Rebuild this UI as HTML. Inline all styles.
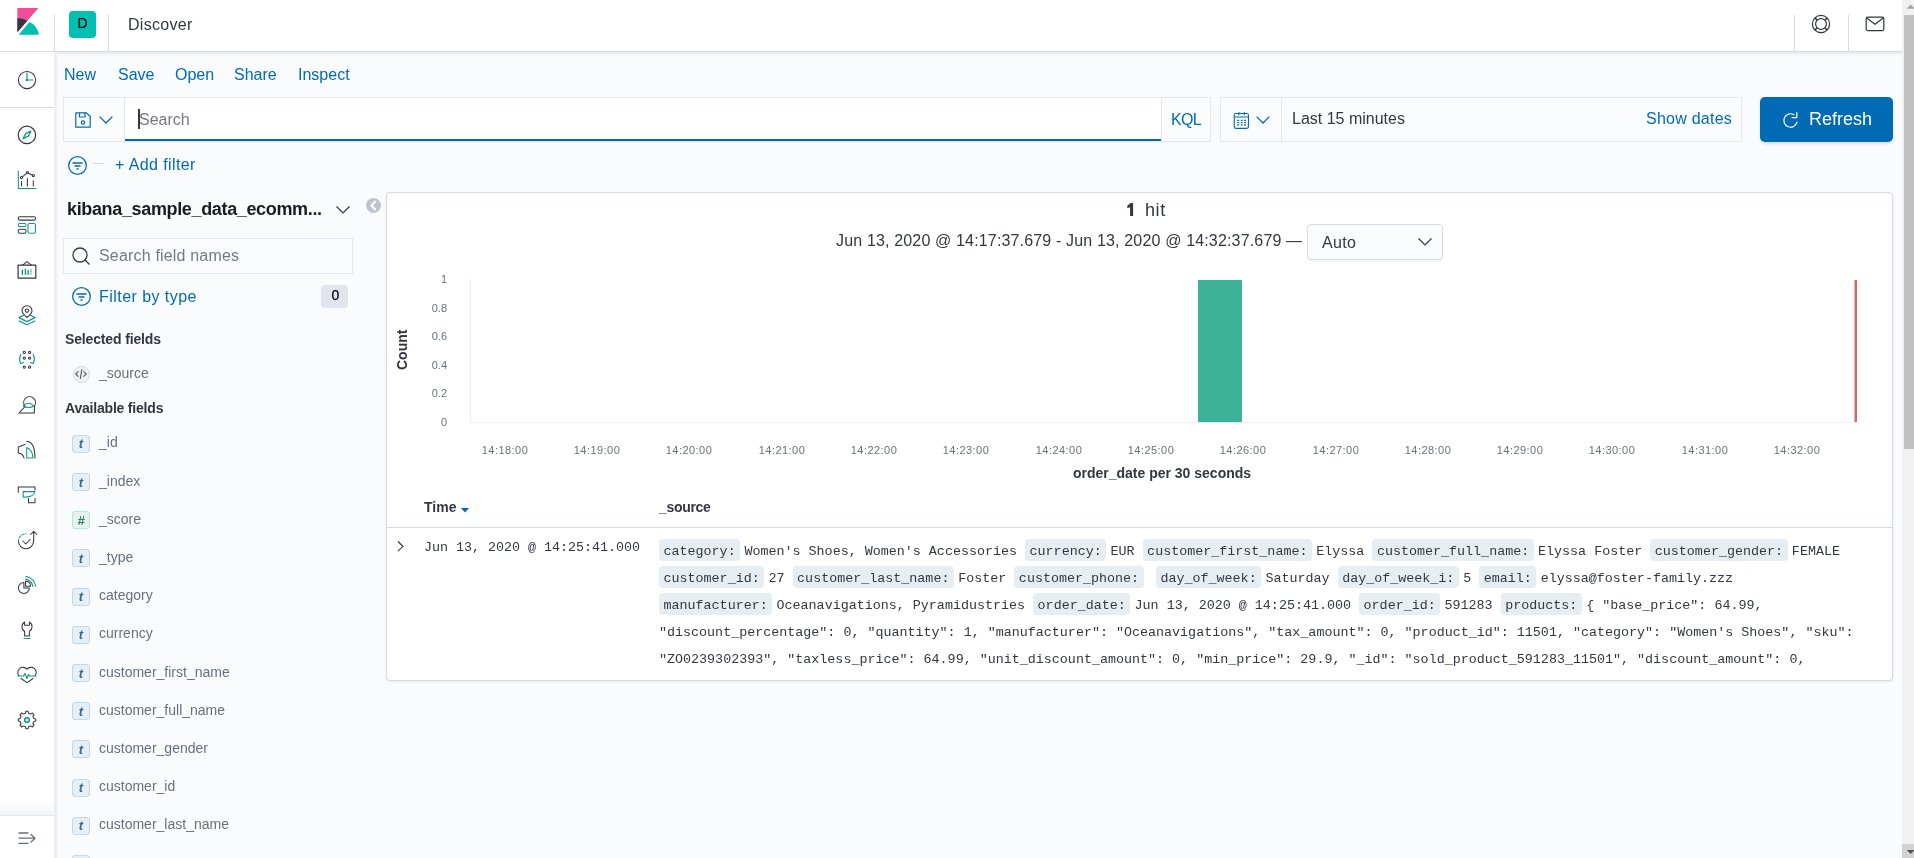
<!DOCTYPE html>
<html><head><meta charset="utf-8">
<style>
*{box-sizing:border-box;margin:0;padding:0}
html,body{width:1914px;height:858px;overflow:hidden;background:#FAFBFD;font-family:"Liberation Sans",sans-serif;color:#343741;-webkit-font-smoothing:antialiased}
.a{position:absolute}
.t{position:absolute;white-space:nowrap;line-height:1;will-change:transform}
.blue{color:#006BB4}
.mono{font-family:"Liberation Mono",monospace}
svg{position:absolute;overflow:visible}
.src{will-change:transform;position:absolute;left:659px;white-space:pre;font-family:"Liberation Mono",monospace;font-size:13.36px;line-height:27px;height:27px}
.k{display:inline-block;font-weight:normal;height:22px;line-height:18px;padding:4px 4.5px 0;background:#E6EEF4;border-radius:4px;margin-right:4.3px;vertical-align:baseline}
.v{font-style:normal}
</style></head><body>

<!-- HEADER -->
<div class="a" id="hdr" style="left:0;top:0;width:1902px;height:52px;background:#fff;border-bottom:1px solid #D3DAE6"></div>
<div class="a" style="left:55px;top:52px;width:1847px;height:1px;background:#E6E9EE"></div><div class="a" style="left:55px;top:53px;width:1847px;height:1px;background:#EEF0F3"></div><div class="a" style="left:55px;top:54px;width:1847px;height:1px;background:#F3F5F8"></div><div class="a" style="left:55px;top:55px;width:1847px;height:1px;background:#F7F8FB"></div>
<!-- kibana logo -->
<svg style="left:13.6px;top:8px" width="27" height="27" viewBox="0 0 32 32"><path fill="#F04E98" d="M4 0v28.789L28.935.017z"/><path fill="#343741" d="M4 12v16.789l11.906-13.738A24.721 24.721 0 004 12"/><path fill="#00BFB3" d="M18.479 16.664L6.268 30.754l-.88 1.013h24.26c-1.304-6.843-5.401-12.703-11.168-15.103"/></svg>
<div class="a" style="left:54px;top:15px;width:1px;height:36px;background:#D3DAE6"></div>
<div class="a" style="left:69px;top:11px;width:27px;height:27px;border-radius:4px;background:#00BFB3"></div>
<div class="t" style="left:68.5px;top:16.1px;width:27px;text-align:center;font-size:14px;color:#000;-webkit-text-stroke:0.2px #000">D</div>
<div class="a" style="left:108px;top:15px;width:1px;height:36px;background:#D3DAE6"></div>
<div class="t" style="left:127.5px;top:17.3px;font-size:16px;letter-spacing:0.3px">Discover</div>
<div class="a" style="left:1794px;top:15px;width:1px;height:36px;background:#D3DAE6"></div>
<div class="a" style="left:1848px;top:15px;width:1px;height:36px;background:#D3DAE6"></div>

<!-- LEFT NAV -->
<div class="a" id="nav" style="left:0;top:52px;width:54px;height:806px;background:#fff"></div>
<div class="a" style="left:54px;top:52px;width:1px;height:806px;background:#F1F3F6"></div><div class="a" style="left:55px;top:52px;width:1px;height:806px;background:#E8EBF0"></div><div class="a" style="left:56px;top:52px;width:1px;height:806px;background:#F0F2F5"></div><div class="a" style="left:57px;top:52px;width:1px;height:806px;background:#F6F7FA"></div>
<div class="a" style="left:0;top:107px;width:54px;height:1px;background:#D3DAE6"></div>
<div class="a" style="left:0;top:800px;width:54px;height:15px;background:linear-gradient(rgba(245,247,250,0),#F3F5F8)"></div><div class="a" style="left:0;top:815px;width:54px;height:1px;background:#E6E9EE"></div>

<svg style="left:17px;top:70px" width="20" height="20" viewBox="0 0 20 20" fill="none" stroke-width="1.05" stroke-linecap="round" stroke-linejoin="round"><circle cx="10" cy="10" r="8.6" stroke="#343741"/><path d="M10 10V3M10 10H15.8" stroke="#12968A" stroke-width="1.2"/><circle cx="10" cy="10" r="1.3" fill="#12968A"/></svg>
<svg style="left:17px;top:125px" width="20" height="20" viewBox="0 0 20 20" fill="none" stroke-width="1.05" stroke-linecap="round" stroke-linejoin="round"><circle cx="9.9" cy="9.9" r="8.7" stroke="#343741" stroke-width="1.2"/><path d="M6.1 13.6L8.7 8.6L13.8 6.2L11.3 11.2Z" stroke="#12968A" stroke-width="1.3"/></svg>
<svg style="left:17px;top:170px" width="20" height="20" viewBox="0 0 20 20" fill="none" stroke-width="1.05" stroke-linecap="round" stroke-linejoin="round"><path d="M1.3 0.9V18.5H18.8" stroke="#12968A"/><path d="M4.5 7.6L10.4 2.7L16.3 5.5" stroke="#343741"/><circle cx="4.5" cy="7.6" r="1.1" fill="#fff" stroke="#343741"/><circle cx="10.4" cy="2.7" r="1.1" fill="#fff" stroke="#343741"/><circle cx="16.3" cy="5.5" r="1.1" fill="#fff" stroke="#343741"/><path d="M4.5 11.5V16M10.4 8.5V16M16.3 10.7V16" stroke="#343741"/></svg>
<svg style="left:17px;top:215px" width="20" height="20" viewBox="0 0 20 20" fill="none" stroke-width="1.05" stroke-linecap="round" stroke-linejoin="round"><rect x="1.3" y="1.7" width="17.2" height="3.4" rx="1.5" stroke="#343741"/><rect x="1.3" y="8.5" width="7.7" height="3" rx="1.3" stroke="#12968A"/><rect x="1.3" y="14.3" width="7.7" height="4" rx="1.5" stroke="#343741"/><rect x="11" y="8.5" width="7.5" height="9.8" rx="1.5" stroke="#12968A"/></svg>
<svg style="left:17px;top:260px" width="20" height="20" viewBox="0 0 20 20" fill="none" stroke-linecap="round" stroke-linejoin="round"><rect x="1.1" y="5.1" width="17.7" height="13" stroke="#343741" stroke-width="1.2"/><path d="M5.7 5.1L10 1.6L14.3 5.1" stroke="#343741" stroke-width="1.1"/><path d="M5.3 10.4V14.3M8.4 9.2V14.3M11.1 10.4V14.3M14 9.6V9.8M14 11.6V11.8M14 13.6V13.8" stroke="#12968A" stroke-width="1.4"/></svg>
<svg style="left:17px;top:305px" width="20" height="20" viewBox="0 0 20 20" fill="none" stroke-width="1.05" stroke-linecap="round" stroke-linejoin="round"><path d="M10 12.5C10 12.5 5 8.3 5 5.7A5 5 0 0 1 15 5.7C15 8.3 10 12.5 10 12.5Z" stroke="#343741"/><circle cx="10" cy="5.6" r="1.7" stroke="#343741"/><path d="M6.5 10.2L2 12.6L10 16.6L18 12.6L13.5 10.2M2 16L10 19.8L18 16" stroke="#12968A" stroke-width="1.2"/></svg>
<svg style="left:17px;top:350px" width="20" height="20" viewBox="0 0 20 20" fill="none" stroke-width="1.05" stroke-linecap="round" stroke-linejoin="round"><circle cx="7.3" cy="2.4" r="1.1" stroke="#343741"/><circle cx="12.6" cy="2.4" r="1.1" stroke="#343741"/><circle cx="7.3" cy="8" r="1.1" stroke="#343741"/><circle cx="12.6" cy="8" r="1.1" stroke="#343741"/><circle cx="7.3" cy="17.1" r="1.1" stroke="#343741"/><circle cx="12.6" cy="17.1" r="1.1" stroke="#343741"/><path d="M3.8 4.5Q1.5 9 3.8 13.5L6.5 12.5M16.2 4.5Q18.5 9 16.2 13.5L13.5 12.5" stroke="#12968A" stroke-width="1.2"/></svg>
<svg style="left:17px;top:395px" width="20" height="20" viewBox="0 0 20 20" fill="none" stroke-width="1.05" stroke-linecap="round" stroke-linejoin="round"><path d="M7.5 10.5A5.9 5.9 0 1 1 17.4 11" stroke="#343741"/><path d="M8.3 11.3L2 18H17.4V11" stroke="#343741"/><path d="M6 11Q11.5 5.5 17 11Q11.5 14 6 11Z" stroke="#12968A"/></svg>
<svg style="left:17px;top:440px" width="20" height="20" viewBox="0 0 20 20" fill="none" stroke-width="1.05" stroke-linecap="round" stroke-linejoin="round"><path d="M9.7 1.3Q18 2 18 18" stroke="#343741"/><path d="M9.7 7.6V18H16Q15.5 10 9.7 7.6Z" stroke="#12968A"/><path d="M8 4.5L1.3 7V13Q6 13.5 7 18" stroke="#343741"/></svg>
<svg style="left:17px;top:485px" width="20" height="20" viewBox="0 0 20 20" fill="none" stroke-width="1.05" stroke-linecap="round" stroke-linejoin="round"><path d="M1.3 7.3V2H18V5M11.5 13.6V17.8H18V13.6" stroke="#343741"/><path d="M6.2 6.6H18Q17 12.2 6.2 12.2Z" stroke="#12968A"/></svg>
<svg style="left:17px;top:530px" width="20" height="20" viewBox="0 0 20 20" fill="none" stroke-width="1.05" stroke-linecap="round" stroke-linejoin="round"><path d="M16.5 11.3A7.5 7.5 0 0 1 1.5 11.3" stroke="#343741"/><path d="M1.5 11.3A7.5 7.5 0 0 1 9 3.8" stroke="#12968A" stroke-dasharray="2.2 1.6"/><path d="M16.7 11.3V1.5M13.6 4.5L16.7 1.3L19.8 4.5M5.8 11L8.8 14L13 9.5" stroke="#343741"/></svg>
<svg style="left:17px;top:575px" width="20" height="20" viewBox="0 0 20 20" fill="none" stroke-width="1.05" stroke-linecap="round" stroke-linejoin="round"><path d="M6.9 7.4A5.5 5.5 0 1 0 12.4 12.9H6.9Z" stroke="#343741"/><path d="M8.6 6A5.5 5.5 0 0 1 13.6 11.2H8.6Z" stroke="#343741"/><path d="M8.5 4.2A9 9 0 0 1 15.8 11.4M8.8 1.3A11.8 11.8 0 0 1 18.6 11" stroke="#12968A" stroke-width="1.2"/></svg>
<svg style="left:17px;top:620px" width="20" height="20" viewBox="0 0 20 20" fill="none" stroke-width="1.05" stroke-linecap="round" stroke-linejoin="round"><path d="M7.6 2V5.2H12.4V2A5.4 5.4 0 0 1 12.4 11.3V16H7.6V11.3A5.4 5.4 0 0 1 7.6 2Z" stroke="#343741"/><path d="M7 18.5H13" stroke="#12968A" stroke-width="1.2"/></svg>
<svg style="left:17px;top:665px" width="20" height="20" viewBox="0 0 20 20" fill="none" stroke-width="1.05" stroke-linecap="round" stroke-linejoin="round"><path d="M2 11A4.6 4.6 0 0 1 10 4.2A4.6 4.6 0 0 1 18 11M4 13.5L10 17.6L16 13.5" stroke="#343741"/><path d="M1 11H6.5L8 8.5L10 13.5L11.5 9.5L12.5 11H19" stroke="#12968A" stroke-width="1.2"/></svg>
<svg style="left:17px;top:710px" width="20" height="20" viewBox="0 0 20 20" fill="none" stroke-width="1.05" stroke-linecap="round" stroke-linejoin="round"><path d="M18.73 8.90 L18.73 11.10 L16.71 11.61 L15.88 13.61 L16.95 15.39 L15.39 16.95 L13.61 15.88 L11.61 16.71 L11.10 18.73 L8.90 18.73 L8.39 16.71 L6.39 15.88 L4.61 16.95 L3.05 15.39 L4.12 13.61 L3.29 11.61 L1.27 11.10 L1.27 8.90 L3.29 8.39 L4.12 6.39 L3.05 4.61 L4.61 3.05 L6.39 4.12 L8.39 3.29 L8.90 1.27 L11.10 1.27 L11.61 3.29 L13.61 4.12 L15.39 3.05 L16.95 4.61 L15.88 6.39 L16.71 8.39Z" stroke="#343741"/><circle cx="10" cy="10" r="2.3" stroke="#12968A" stroke-width="1.6"/></svg>
<svg style="left:17px;top:828px" width="20" height="20" viewBox="0 0 20 20" fill="none" stroke-width="1.05" stroke-linecap="round" stroke-linejoin="round"><path d="M2 5H11M2 10.2H18M2 15.4H11M14 6.5L18 10.2L14 14" stroke="#69707D" stroke-width="1.3"/></svg>

<!-- header right icons -->
<svg style="left:1811px;top:14px" width="20" height="20" viewBox="0 0 20 20" fill="none" stroke="#343741" stroke-width="1.2"><circle cx="10" cy="10" r="8.6"/><circle cx="10" cy="10" r="5.4"/><path d="M3.9 3.9L6.2 6.2M16.1 3.9L13.8 6.2M3.9 16.1L6.2 13.8M16.1 16.1L13.8 13.8" stroke-width="1.6"/></svg>
<svg style="left:1865px;top:16px" width="20" height="16" viewBox="0 0 20 16" fill="none" stroke="#343741" stroke-width="1.2" stroke-linejoin="round"><rect x="1.2" y="1.2" width="17.6" height="13.4" rx="1.5"/><path d="M1.8 2L10 8.3L18.2 2"/></svg>
<!-- TOP NAV -->
<div class="t blue" style="left:64.4px;top:66.5px;font-size:16px">New</div>
<div class="t blue" style="left:118.4px;top:66.5px;font-size:16px">Save</div>
<div class="t blue" style="left:174.6px;top:66.5px;font-size:16px">Open</div>
<div class="t blue" style="left:234.2px;top:66.5px;font-size:16px">Share</div>
<div class="t blue" style="left:297.6px;top:66.5px;font-size:16px">Inspect</div>

<!-- QUERY BAR -->
<div class="a" style="left:63px;top:97px;width:1148px;height:45px;border:1px solid #E3E8F0;background:#FBFCFD;box-shadow:0 1px 1px -1px rgba(152,162,179,.2)"></div>
<div class="a" style="left:124px;top:98px;width:1px;height:43px;background:#E3E8F0"></div>
<div class="a" style="left:125px;top:98px;width:1036px;height:43px;background:#fff;border-bottom:2px solid #006BB4"></div>
<div class="a" style="left:1161px;top:98px;width:1px;height:43px;background:#E3E8F0"></div>
<div class="a" style="left:138px;top:109px;width:2px;height:20px;background:#343741"></div>
<div class="t" style="left:139px;top:111.5px;font-size:16px;color:#737985">Search</div>
<div class="t blue" style="left:1171px;top:111.5px;font-size:16px;letter-spacing:-0.7px">KQL</div>

<div class="a" style="left:1220px;top:97px;width:522px;height:45px;border:1px solid #E3E8F0;background:#FBFCFD"></div>
<div class="a" style="left:1281px;top:98px;width:1px;height:43px;background:#E3E8F0"></div>
<div class="t" style="left:1292px;top:111.3px;font-size:16px">Last 15 minutes</div>
<div class="t blue" style="left:1646px;top:111px;font-size:16px;letter-spacing:0.25px">Show dates</div>

<div class="a" style="left:1760px;top:97px;width:133px;height:45px;border-radius:5px;background:#006BB4;box-shadow:0 2px 3px rgba(0,0,0,.12)"></div>
<div class="t" style="left:1808.7px;top:109.8px;font-size:18px;color:#fff">Refresh</div>

<!-- FILTER ROW -->
<div class="a" style="left:93px;top:163px;width:11px;height:1px;background:#D3DAE6"></div>
<div class="t blue" style="left:114.8px;top:156.3px;font-size:16px;letter-spacing:0.4px;margin-top:1px">+ Add filter</div>

<!-- query icons -->
<svg style="left:74.5px;top:111.5px" width="16" height="16" viewBox="0 0 16 16" fill="none" stroke="#006BB4" stroke-width="1.2" stroke-linejoin="round"><path d="M0.8 0.8H11.5L15.2 4.5V15.2H0.8Z"/><path d="M4.5 0.8V5H10V0.8"/><circle cx="8" cy="10.5" r="1.7"/></svg>
<svg style="left:99px;top:115.5px" width="14" height="8" viewBox="0 0 14 8"><path d="M0.6 0.6L7 7L13.4 0.6" fill="none" stroke="#006BB4" stroke-width="1.3"/></svg>
<svg style="left:1232.5px;top:112px" width="17" height="17" viewBox="0 0 17 17" fill="none" stroke="#006BB4" stroke-width="1.1"><rect x="1.2" y="1.5" width="14.3" height="14.9" rx="1.8"/><path d="M1.2 5H15.5M5.9 0.2V3.2M11.3 0.2V3.2"/><path d="M4.3 8.4H6.2M7.8 8.4H9.6M11.1 8.4H13M4.3 10.6H6.2M7.8 10.6H9.6M11.1 10.6H13M4.3 12.8H6.2M7.8 12.8H9.6M11.1 12.8H13" stroke-width="1.2"/></svg>
<svg style="left:1256px;top:115.5px" width="14" height="8" viewBox="0 0 14 8"><path d="M0.6 0.6L7 7L13.4 0.6" fill="none" stroke="#006BB4" stroke-width="1.3"/></svg>
<svg style="left:1782.5px;top:112.5px" width="15" height="15" viewBox="0 0 15 15" fill="none" stroke="#fff" stroke-width="1.2" stroke-linecap="round" stroke-linejoin="round"><path d="M10.9 1.7A6.7 6.7 0 1 0 14 9.2"/><path d="M13.8 -0.3V4.6H9"/></svg>
<!-- filter row icon -->
<svg style="left:67.5px;top:155.5px" width="19" height="19" viewBox="0 0 19 19" fill="none" stroke="#006BB4" stroke-width="1.3"><circle cx="9.5" cy="9.5" r="8.8"/><path d="M4.5 7H14.5M6.5 10H12.5M8.5 13H10.5"/></svg>
<!-- SIDEBAR -->
<div class="t" style="left:66.9px;top:200px;font-size:18px;font-weight:bold;letter-spacing:-0.35px;color:#1A1C21">kibana_sample_data_ecomm...</div>
<svg style="left:336px;top:206px" width="14" height="8" viewBox="0 0 14 8"><path d="M0.5 0.5L7 7L13.5 0.5" fill="none" stroke="#343741" stroke-width="1.2"/></svg>
<div class="a" style="left:365.5px;top:197.5px;width:15px;height:15px;border-radius:50%;background:#BFC4CC"></div>
<svg style="left:365.5px;top:197.5px" width="15" height="15" viewBox="0 0 15 15"><path d="M9 3.8L5.5 7.5L9 11.2" fill="none" stroke="#fff" stroke-width="2.4" stroke-linecap="round" stroke-linejoin="round"/></svg>

<div class="a" style="left:63px;top:238px;width:290px;height:36px;border:1px solid #E3E8F0;background:#FBFCFD"></div>
<svg style="left:72px;top:247px" width="18" height="18" viewBox="0 0 18 18"><circle cx="8" cy="8" r="7" fill="none" stroke="#343741" stroke-width="1.3"/><path d="M13 13L17.5 17.5" stroke="#343741" stroke-width="1.3"/></svg>
<div class="t" style="left:99.2px;top:247.5px;font-size:16px;letter-spacing:0.18px;color:#737985">Search field names</div>

<svg style="left:71.5px;top:287px" width="19" height="19" viewBox="0 0 19 19"><circle cx="9.5" cy="9.5" r="8.8" fill="none" stroke="#006BB4" stroke-width="1.3"/><path d="M4.5 7H14.5M6.5 10H12.5M8.5 13H10.5" stroke="#006BB4" stroke-width="1.3"/></svg>
<div class="t blue" style="left:99.2px;top:288.9px;font-size:16px;letter-spacing:0.45px">Filter by type</div>
<div class="a" style="left:321px;top:285px;width:27px;height:23px;border-radius:4px;background:#E0E5EE"></div>
<div class="t" style="left:321.7px;top:288px;width:27px;text-align:center;font-size:14px;color:#000;-webkit-text-stroke:0.25px #000">0</div>

<div class="t" style="left:64.8px;top:332px;font-size:14px;font-weight:bold;letter-spacing:-0.15px">Selected fields</div>
<div class="a" style="left:72.5px;top:365.5px;width:17.5px;height:17.5px;border-radius:50%;background:#F1F2F4;border:1px solid #D3D6DC"></div>
<svg style="left:72px;top:365px" width="18" height="18" viewBox="0 0 18 18" fill="none" stroke="#5F6570" stroke-width="1.2" stroke-linecap="round" stroke-linejoin="round"><path d="M6.2 6.6L3.8 9L6.2 11.4M9.8 4.6L8.4 13.4M11.8 6.6L14.2 9L11.8 11.4"/></svg>
<div class="t" style="left:99.2px;top:366.0px;font-size:14px;color:#69707D">_source</div>
<div class="t" style="left:64.8px;top:400.5px;font-size:14px;font-weight:bold;letter-spacing:-0.2px">Available fields</div>
<div class="a" style="left:72px;top:434.8px;width:18px;height:18px;border-radius:3px;background:#E6EFF6;border:1px solid #C2D7E8"></div>
<div class="t" style="left:72px;top:437.3px;width:18px;text-align:center;font-size:13px;font-weight:bold;font-style:italic;color:#3D6A8C">t</div>
<div class="t" style="left:99.2px;top:435.3px;font-size:14px;color:#69707D">_id</div>
<div class="a" style="left:72px;top:473.0px;width:18px;height:18px;border-radius:3px;background:#E6EFF6;border:1px solid #C2D7E8"></div>
<div class="t" style="left:72px;top:475.5px;width:18px;text-align:center;font-size:13px;font-weight:bold;font-style:italic;color:#3D6A8C">t</div>
<div class="t" style="left:99.2px;top:473.5px;font-size:14px;color:#69707D">_index</div>
<div class="a" style="left:72px;top:511.2px;width:18px;height:18px;border-radius:3px;background:#E6F4EF;border:1px solid #BFE3D7"></div>
<div class="t" style="left:72px;top:513.7px;width:18px;text-align:center;font-size:13px;font-weight:bold;font-style:italic;color:#347E64">#</div>
<div class="t" style="left:99.2px;top:511.7px;font-size:14px;color:#69707D">_score</div>
<div class="a" style="left:72px;top:549.4px;width:18px;height:18px;border-radius:3px;background:#E6EFF6;border:1px solid #C2D7E8"></div>
<div class="t" style="left:72px;top:551.9px;width:18px;text-align:center;font-size:13px;font-weight:bold;font-style:italic;color:#3D6A8C">t</div>
<div class="t" style="left:99.2px;top:549.9px;font-size:14px;color:#69707D">_type</div>
<div class="a" style="left:72px;top:587.6px;width:18px;height:18px;border-radius:3px;background:#E6EFF6;border:1px solid #C2D7E8"></div>
<div class="t" style="left:72px;top:590.1px;width:18px;text-align:center;font-size:13px;font-weight:bold;font-style:italic;color:#3D6A8C">t</div>
<div class="t" style="left:99.2px;top:588.1px;font-size:14px;color:#69707D">category</div>
<div class="a" style="left:72px;top:625.8px;width:18px;height:18px;border-radius:3px;background:#E6EFF6;border:1px solid #C2D7E8"></div>
<div class="t" style="left:72px;top:628.3px;width:18px;text-align:center;font-size:13px;font-weight:bold;font-style:italic;color:#3D6A8C">t</div>
<div class="t" style="left:99.2px;top:626.3px;font-size:14px;color:#69707D">currency</div>
<div class="a" style="left:72px;top:664.0px;width:18px;height:18px;border-radius:3px;background:#E6EFF6;border:1px solid #C2D7E8"></div>
<div class="t" style="left:72px;top:666.5px;width:18px;text-align:center;font-size:13px;font-weight:bold;font-style:italic;color:#3D6A8C">t</div>
<div class="t" style="left:99.2px;top:664.5px;font-size:14px;color:#69707D">customer_first_name</div>
<div class="a" style="left:72px;top:702.2px;width:18px;height:18px;border-radius:3px;background:#E6EFF6;border:1px solid #C2D7E8"></div>
<div class="t" style="left:72px;top:704.7px;width:18px;text-align:center;font-size:13px;font-weight:bold;font-style:italic;color:#3D6A8C">t</div>
<div class="t" style="left:99.2px;top:702.7px;font-size:14px;color:#69707D">customer_full_name</div>
<div class="a" style="left:72px;top:740.4px;width:18px;height:18px;border-radius:3px;background:#E6EFF6;border:1px solid #C2D7E8"></div>
<div class="t" style="left:72px;top:742.9px;width:18px;text-align:center;font-size:13px;font-weight:bold;font-style:italic;color:#3D6A8C">t</div>
<div class="t" style="left:99.2px;top:740.9px;font-size:14px;color:#69707D">customer_gender</div>
<div class="a" style="left:72px;top:778.6px;width:18px;height:18px;border-radius:3px;background:#E6EFF6;border:1px solid #C2D7E8"></div>
<div class="t" style="left:72px;top:781.1px;width:18px;text-align:center;font-size:13px;font-weight:bold;font-style:italic;color:#3D6A8C">t</div>
<div class="t" style="left:99.2px;top:779.1px;font-size:14px;color:#69707D">customer_id</div>
<div class="a" style="left:72px;top:816.8px;width:18px;height:18px;border-radius:3px;background:#E6EFF6;border:1px solid #C2D7E8"></div>
<div class="t" style="left:72px;top:819.3px;width:18px;text-align:center;font-size:13px;font-weight:bold;font-style:italic;color:#3D6A8C">t</div>
<div class="t" style="left:99.2px;top:817.3px;font-size:14px;color:#69707D">customer_last_name</div>
<div class="a" style="left:72px;top:855.0px;width:18px;height:18px;border-radius:3px;background:#E6EFF6;border:1px solid #C2D7E8"></div>
<div class="t" style="left:72px;top:857.5px;width:18px;text-align:center;font-size:13px;font-weight:bold;font-style:italic;color:#3D6A8C">t</div>


<!-- MAIN PANEL -->
<div class="a" style="left:386px;top:192px;width:1507px;height:489px;background:#fff;border:1px solid #D3DAE6;border-radius:4px;box-shadow:0 1px 3px rgba(0,0,0,.08)"></div>


<!-- HITS -->
<svg style="left:1126px;top:202px" width="8" height="15" viewBox="0 0 8 15"><path d="M4.1 1H7.1V14H4.1V5.2L1.3 6.2V3.7L4.6 1Z" fill="#343741"/></svg>
<div class="t" style="left:1144.6px;top:200.8px;font-size:18px;letter-spacing:0.6px">hit</div>
<div class="t" style="left:836px;top:232.5px;font-size:16px;letter-spacing:0.16px">Jun 13, 2020 @ 14:17:37.679 - Jun 13, 2020 @ 14:32:37.679 &mdash;</div>
<div class="a" style="left:1307px;top:224px;width:136px;height:35.5px;border:1px solid #D5DCE8;border-radius:4px;background:#FBFCFD;box-shadow:0 1px 2px rgba(0,0,0,.06)"></div>
<div class="t" style="left:1321.7px;top:229.5px;font-size:16px;line-height:26px;letter-spacing:0.3px">Auto</div>
<svg style="left:1418px;top:238px" width="14" height="8" viewBox="0 0 14 8"><path d="M0.5 0.5L7 7L13.5 0.5" fill="none" stroke="#343741" stroke-width="1.2"/></svg>

<!-- CHART -->
<div class="a" style="left:470px;top:279px;width:1px;height:143px;background:#EEF0F3"></div>
<div class="a" style="left:470px;top:421.5px;width:1386px;height:1px;background:#EEF0F3"></div>
<div class="a" style="left:1198.3px;top:279.5px;width:44px;height:142.5px;background:#3EB398"></div>
<div class="a" style="left:1854px;top:279.5px;width:1px;height:142.5px;background:#EEB4B2"></div><div class="a" style="left:1855px;top:279.5px;width:2px;height:142.5px;background:#DA6462"></div>
<div class="t" style="left:400px;top:273.5px;width:47px;text-align:right;font-size:11px;line-height:11px;color:#69707D">1</div>
<div class="t" style="left:400px;top:302.5px;width:47px;text-align:right;font-size:11px;line-height:11px;color:#69707D">0.8</div>
<div class="t" style="left:400px;top:331.0px;width:47px;text-align:right;font-size:11px;line-height:11px;color:#69707D">0.6</div>
<div class="t" style="left:400px;top:359.5px;width:47px;text-align:right;font-size:11px;line-height:11px;color:#69707D">0.4</div>
<div class="t" style="left:400px;top:388.0px;width:47px;text-align:right;font-size:11px;line-height:11px;color:#69707D">0.2</div>
<div class="t" style="left:400px;top:416.5px;width:47px;text-align:right;font-size:11px;line-height:11px;color:#69707D">0</div>
<div class="t" style="left:382px;top:343px;width:40px;text-align:center;font-size:14px;font-weight:bold;transform:rotate(-90deg)">Count</div>
<div class="t" style="left:474.8px;top:444.5px;width:60px;text-align:center;font-size:11px;letter-spacing:0.45px;color:#69707D">14:18:00</div>
<div class="t" style="left:567.1px;top:444.5px;width:60px;text-align:center;font-size:11px;letter-spacing:0.45px;color:#69707D">14:19:00</div>
<div class="t" style="left:659.4px;top:444.5px;width:60px;text-align:center;font-size:11px;letter-spacing:0.45px;color:#69707D">14:20:00</div>
<div class="t" style="left:751.7px;top:444.5px;width:60px;text-align:center;font-size:11px;letter-spacing:0.45px;color:#69707D">14:21:00</div>
<div class="t" style="left:844.0px;top:444.5px;width:60px;text-align:center;font-size:11px;letter-spacing:0.45px;color:#69707D">14:22:00</div>
<div class="t" style="left:936.3px;top:444.5px;width:60px;text-align:center;font-size:11px;letter-spacing:0.45px;color:#69707D">14:23:00</div>
<div class="t" style="left:1028.6px;top:444.5px;width:60px;text-align:center;font-size:11px;letter-spacing:0.45px;color:#69707D">14:24:00</div>
<div class="t" style="left:1120.9px;top:444.5px;width:60px;text-align:center;font-size:11px;letter-spacing:0.45px;color:#69707D">14:25:00</div>
<div class="t" style="left:1213.2px;top:444.5px;width:60px;text-align:center;font-size:11px;letter-spacing:0.45px;color:#69707D">14:26:00</div>
<div class="t" style="left:1305.5px;top:444.5px;width:60px;text-align:center;font-size:11px;letter-spacing:0.45px;color:#69707D">14:27:00</div>
<div class="t" style="left:1397.8px;top:444.5px;width:60px;text-align:center;font-size:11px;letter-spacing:0.45px;color:#69707D">14:28:00</div>
<div class="t" style="left:1490.1px;top:444.5px;width:60px;text-align:center;font-size:11px;letter-spacing:0.45px;color:#69707D">14:29:00</div>
<div class="t" style="left:1582.4px;top:444.5px;width:60px;text-align:center;font-size:11px;letter-spacing:0.45px;color:#69707D">14:30:00</div>
<div class="t" style="left:1674.7px;top:444.5px;width:60px;text-align:center;font-size:11px;letter-spacing:0.45px;color:#69707D">14:31:00</div>
<div class="t" style="left:1767.0px;top:444.5px;width:60px;text-align:center;font-size:11px;letter-spacing:0.45px;color:#69707D">14:32:00</div>
<div class="t" style="left:1062px;top:466px;width:200px;text-align:center;font-size:14px;font-weight:bold">order_date per 30 seconds</div>

<!-- TABLE -->
<div class="t" style="left:423.9px;top:499.7px;font-size:14px;font-weight:bold">Time</div>
<svg style="left:461px;top:508px" width="8" height="5" viewBox="0 0 8 5"><path d="M0 0H8L4 4.5z" fill="#006BB4"/></svg>
<div class="t" style="left:659px;top:499.7px;font-size:14px;font-weight:bold;letter-spacing:-0.3px">_source</div>
<div class="a" style="left:387px;top:527px;width:1505px;height:1px;background:#D3DAE6"></div>
<svg style="left:396.5px;top:540.5px" width="8" height="11" viewBox="0 0 8 11"><path d="M1 0.5L6 5.3L1 10.1" fill="none" stroke="#343741" stroke-width="1.1"/></svg>
<div class="t mono" style="left:424px;top:541px;font-size:13.333px">Jun 13, 2020 @ 14:25:41.000</div>

<!-- SOURCE -->
<div class="src" style="top:538.0px"><b class="k">category:</b><i class="v">Women's Shoes, Women's Accessories</i> <b class="k">currency:</b><i class="v">EUR</i> <b class="k">customer_first_name:</b><i class="v">Elyssa</i> <b class="k">customer_full_name:</b><i class="v">Elyssa Foster</i> <b class="k">customer_gender:</b><i class="v">FEMALE</i></div>
<div class="src" style="top:565.0px"><b class="k">customer_id:</b><i class="v">27</i> <b class="k">customer_last_name:</b><i class="v">Foster</i> <b class="k">customer_phone:</b><i class="v"></i> <b class="k">day_of_week:</b><i class="v">Saturday</i> <b class="k">day_of_week_i:</b><i class="v">5</i> <b class="k">email:</b><i class="v">elyssa@foster-family.zzz</i></div>
<div class="src" style="top:592.0px"><b class="k">manufacturer:</b><i class="v">Oceanavigations, Pyramidustries</i> <b class="k">order_date:</b><i class="v">Jun 13, 2020 @ 14:25:41.000</i> <b class="k">order_id:</b><i class="v">591283</i> <b class="k">products:</b><i class="v">{ &quot;base_price&quot;: 64.99,</i></div>
<div class="src" style="top:619.0px">&quot;discount_percentage&quot;: 0, &quot;quantity&quot;: 1, &quot;manufacturer&quot;: &quot;Oceanavigations&quot;, &quot;tax_amount&quot;: 0, &quot;product_id&quot;: 11501, &quot;category&quot;: &quot;Women's Shoes&quot;, &quot;sku&quot;:</div>
<div class="src" style="top:646.0px">&quot;ZO0239302393&quot;, &quot;taxless_price&quot;: 64.99, &quot;unit_discount_amount&quot;: 0, &quot;min_price&quot;: 29.9, &quot;_id&quot;: &quot;sold_product_591283_11501&quot;, &quot;discount_amount&quot;: 0,</div>
<!-- SCROLLBAR -->
<div class="a" style="left:1902px;top:0;width:12px;height:858px;background:#F1F1F1"></div>
<div class="a" style="left:1904px;top:15px;width:10px;height:434px;background:#C1C1C1"></div>
<svg style="left:1902px;top:0" width="12" height="15" viewBox="0 0 12 15"><path d="M8.7 4.6L12.7 8.8H4.7Z" fill="#A3A3A3"/></svg>
<div class="a" style="left:1902px;top:844px;width:12px;height:14px;background:#D2D2D2"></div>
<svg style="left:1902px;top:844px" width="12" height="14" viewBox="0 0 12 14"><path d="M4.7 5.9H12.7L8.7 10.1Z" fill="#505050"/></svg>
</body></html>
